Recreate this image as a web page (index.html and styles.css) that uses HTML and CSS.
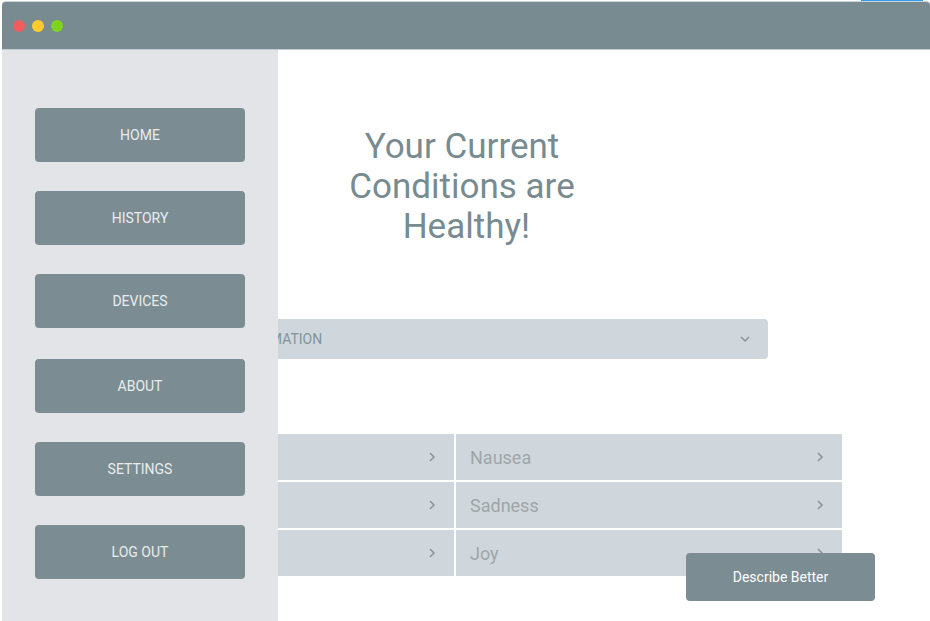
FILE: index.html
```html
<!DOCTYPE html>
<html lang="en">
<head>
<meta charset="utf-8">
<title>Current Conditions</title>
<link rel="stylesheet" href="styles.css">
</head>
<body>
<div class="tab-marker"></div>
<div class="window">
  <header class="titlebar">
    <span class="dot dot-close"></span>
    <span class="dot dot-minimize"></span>
    <span class="dot dot-zoom"></span>
  </header>
  <div class="body">
    <main class="main">
      <section class="summary">
        <h1 class="title">Your Current<br>Conditions are<br>&nbsp;Healthy!</h1>
        <div class="picker">
          <select class="picker-select" aria-label="Information">
            <option>INFORMATION</option>
          </select>
          <svg class="picker-icon" viewBox="0 0 10 10" aria-hidden="true"><path d="M1 3 5 7 9 3"/></svg>
        </div>
      </section>
      <section class="feelings">
        <button class="feeling" type="button" aria-label="Fatigue"><span></span><svg class="chevron" viewBox="0 0 10 10" aria-hidden="true"><path d="M3 1 7 5 3 9"/></svg></button>
        <button class="feeling" type="button"><span>Nausea</span><svg class="chevron" viewBox="0 0 10 10" aria-hidden="true"><path d="M3 1 7 5 3 9"/></svg></button>
        <button class="feeling" type="button" aria-label="Anger"><span></span><svg class="chevron" viewBox="0 0 10 10" aria-hidden="true"><path d="M3 1 7 5 3 9"/></svg></button>
        <button class="feeling" type="button"><span>Sadness</span><svg class="chevron" viewBox="0 0 10 10" aria-hidden="true"><path d="M3 1 7 5 3 9"/></svg></button>
        <button class="feeling" type="button" aria-label="Fear"><span></span><svg class="chevron" viewBox="0 0 10 10" aria-hidden="true"><path d="M3 1 7 5 3 9"/></svg></button>
        <button class="feeling" type="button"><span>Joy</span><svg class="chevron" viewBox="0 0 10 10" aria-hidden="true"><path d="M3 1 7 5 3 9"/></svg></button>
      </section>
    </main>
    <nav class="drawer">
      <div class="drawer-group">
        <button class="nav-button" type="button">HOME</button>
        <button class="nav-button" type="button">HISTORY</button>
        <button class="nav-button" type="button">DEVICES</button>
      </div>
      <div class="drawer-group">
        <button class="nav-button" type="button">ABOUT</button>
        <button class="nav-button" type="button">SETTINGS</button>
        <button class="nav-button" type="button">LOG OUT</button>
      </div>
    </nav>
    <button class="describe" type="button">Describe Better</button>
  </div>
</div>
</body>
</html>
```
FILE: styles.css
```css
* {
  box-sizing: border-box;
}

body {
  margin: 0;
  background: #fff;
  font-family: Roboto, "Liberation Sans", sans-serif;
}

button,
select {
  margin: 0;
  border: 0;
  font-family: inherit;
}

.tab-marker {
  position: absolute;
  top: 0;
  right: 7px;
  width: 62px;
  height: 1px;
  background: #2f9bf0;
}

.window {
  display: flex;
  flex-direction: column;
  min-height: 100vh;
  padding: 1px 0 0 2px;
}

.titlebar {
  display: flex;
  align-items: center;
  gap: 7px;
  height: 49px;
  padding-left: 11px;
  border-top: 1px solid #ccd4d6;
  border-bottom: 1px solid #c3cbcd;
  border-radius: 4px 4px 0 0;
  background: #788b90;
}

.dot {
  width: 12px;
  height: 12px;
  border-radius: 50%;
}

.dot-close {
  background: #f25e5e;
}

.dot-minimize {
  background: #ffcb2f;
}

.dot-zoom {
  background: #7ed321;
}

.body {
  position: relative;
  flex: 1;
}

.main {
  padding: 77px 88px 44px 66px;
}

.summary {
  padding: 0 74px 0 88px;
}

.title {
  margin: 0 0 72px;
  color: #788b90;
  font-size: 35px;
  font-weight: 400;
  line-height: 40px;
  text-align: center;
}

.picker {
  position: relative;
}

.picker-select {
  display: block;
  width: 100%;
  height: 40px;
  padding: 0 40px 0 74px;
  border-radius: 4px;
  appearance: none;
  background: #cfd7dc;
  color: #82949a;
  font-size: 14px;
}

.picker-icon {
  position: absolute;
  top: 15px;
  right: 18px;
  width: 10px;
  height: 10px;
  pointer-events: none;
}

.picker-icon path,
.chevron path {
  fill: none;
  stroke: #8d9294;
  stroke-width: 1.5;
}

.feelings {
  display: grid;
  grid-template-columns: 1fr 1fr;
  gap: 2px;
  margin-top: 75px;
}

.feeling {
  display: flex;
  align-items: center;
  justify-content: space-between;
  height: 46px;
  padding: 0 17px 0 14px;
  background: #cfd7dc;
  color: #9fa6a9;
  font-size: 18px;
}

.chevron {
  width: 10px;
  height: 10px;
}

.drawer {
  position: absolute;
  top: 0;
  bottom: 0;
  left: 0;
  display: flex;
  flex-direction: column;
  gap: 31px;
  width: 276px;
  padding: 58px 33px 0;
  background: #e3e4e8;
}

.drawer-group {
  display: flex;
  flex-direction: column;
  gap: 29px;
}

.nav-button {
  height: 54px;
  border-radius: 4px;
  background: #7b8c92;
  color: #e8ecee;
  font-size: 14px;
}

.describe {
  position: absolute;
  right: 55px;
  bottom: 20px;
  width: 189px;
  height: 48px;
  border-radius: 4px;
  background: #7b8c92;
  color: #fff;
  font-size: 14px;
}
```
